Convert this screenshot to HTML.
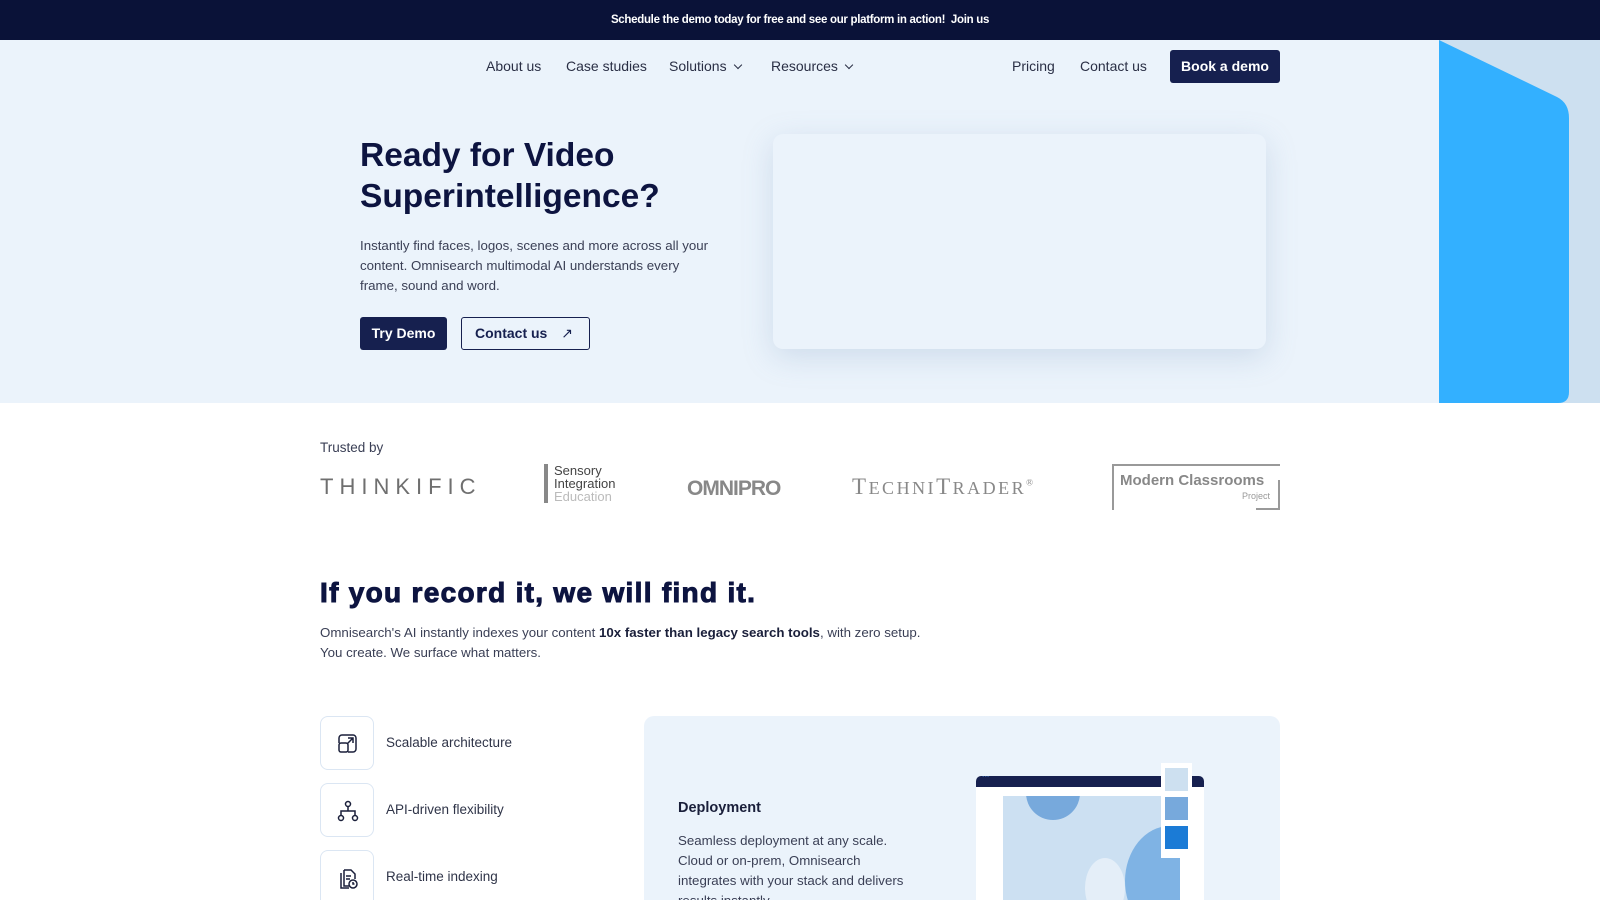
<!DOCTYPE html>
<html style="overflow:hidden;height:900px"><head><meta charset="utf-8"><style>
*{margin:0;padding:0;box-sizing:border-box}
body{width:1600px;height:900px;overflow:hidden;font-family:"Liberation Sans",Arial,sans-serif;background:#fff;color:#1a1f3a;position:relative}
.top{height:40px;background:#0a1238;color:#fff;font-size:11.5px;font-weight:bold;text-align:center;line-height:40px;letter-spacing:-0.3px}
.hero{position:absolute;top:40px;left:0;width:1600px;height:363px;background:#ebf3fb}
.nav a{position:absolute;top:58px;font-size:14px;color:#2a2f45;text-decoration:none}
.chev{display:inline-block;width:6px;height:6px;border-right:1.5px solid #2a2f45;border-bottom:1.5px solid #2a2f45;transform:rotate(45deg);margin-left:8px;position:relative;top:-3px}
.btn{position:absolute;border-radius:3px;font-weight:bold;font-size:14px;text-align:center}
h1{position:absolute;left:360px;top:135px;font-size:33.5px;line-height:41px;color:#0d1440;font-weight:bold}
.p{position:absolute;font-size:13.3px;line-height:20px;color:#3a3f55}
.card{position:absolute;left:773px;top:134px;width:493px;height:215px;background:#ebf3fb;border-radius:10px;box-shadow:0 8px 30px rgba(120,150,190,.25)}
.logo{position:absolute;color:#777;}
.feat{position:absolute;left:320px;width:54px;height:54px;border:1px solid #dbe6f3;border-radius:8px;background:#fff}
.feat svg{position:absolute;left:15px;top:15px}
.fl{position:absolute;left:386px;font-size:13.5px;color:#2f3448}
</style></head><body>
<div class="top">Schedule the demo today for free and see our platform in action! &nbsp;Join us</div>
<div class="hero"></div>
<svg style="position:absolute;left:1439px;top:40px" width="161" height="363"><rect x="0" y="0" width="161" height="363" fill="#cde0f0"/><path d="M0 0 L118 57 Q130 63 130 78 L130 352 Q130 363 119 363 L0 363 Z" fill="#33b0ff"/></svg>
<div class="nav">
<a style="left:486px">About us</a>
<a style="left:566px">Case studies</a>
<a style="left:669px">Solutions<span class="chev"></span></a>
<a style="left:771px">Resources<span class="chev"></span></a>
<a style="left:1012px">Pricing</a>
<a style="left:1080px">Contact us</a>
</div>
<div class="btn" style="left:1170px;top:50px;width:110px;height:33px;line-height:33px;background:#16204f;color:#fff">Book a demo</div>
<h1>Ready for Video<br>Superintelligence?</h1>
<div class="p" style="left:360px;top:236px;width:360px">Instantly find faces, logos, scenes and more across all your content. Omnisearch multimodal AI understands every frame, sound and word.</div>
<div class="btn" style="left:360px;top:317px;width:87px;height:33px;line-height:33px;background:#16204f;color:#fff">Try Demo</div>
<div class="btn" style="left:461px;top:317px;width:129px;height:33px;line-height:31px;border:1px solid #16204f;color:#16204f;text-align:left;padding-left:13px">Contact us <span style="position:absolute;right:16px;font-weight:normal">↗</span></div>
<div class="card"></div>
<div class="p" style="left:320px;top:438px;font-size:13.5px">Trusted by</div>
<div class="logo" style="left:320px;top:474px;font-size:22px;letter-spacing:6px;color:#6f6f6f">THINKIFIC</div>
<div class="logo" style="left:544px;top:464px;border-left:4px solid #888;padding-left:6px;font-size:13px;line-height:13px;color:#444">Sensory<br>Integration<br><span style="color:#bbb">Education</span></div>
<div class="logo" style="left:687px;top:477px;font-size:21px;font-weight:bold;color:#888;letter-spacing:-1px">OMNIPRO</div>
<div class="logo" style="left:852px;top:474px;font-family:'Liberation Serif',serif;font-size:23px;letter-spacing:2.5px;color:#888">T<span style="font-size:18px">ECHNI</span>T<span style="font-size:18px">RADER</span><sup style="font-size:9px">®</sup></div>
<div class="logo" style="left:1112px;top:464px;width:168px;height:46px;border-left:2px solid #999;border-top:2px solid #999;"><div style="position:absolute;right:0;bottom:0;width:24px;height:30px;border-right:2px solid #999;border-bottom:2px solid #999"></div><div style="position:absolute;left:6px;top:6px;font-weight:bold;font-size:15px;color:#888">Modern Classrooms</div><div style="position:absolute;right:10px;top:25px;font-size:9px;color:#999">Project</div></div>
<div style="position:absolute;left:320px;top:577px;font-size:28px;font-weight:900;color:#0d1440;letter-spacing:1.3px;-webkit-text-stroke:1px #0d1440">If you record it, we will find it.</div>
<div class="p" style="left:320px;top:623px;width:640px">Omnisearch's AI instantly indexes your content <b style="color:#1a1f3a">10x faster than legacy search tools</b>, with zero setup.<br>You create. We surface what matters.</div>
<div class="feat" style="top:716px"><svg width="24" height="24" fill="none" stroke="#1a1f3a" stroke-width="1.5"><rect x="3" y="11" width="9" height="9" rx="2"/><path d="M3 11V6a3 3 0 0 1 3-3h11a3 3 0 0 1 3 3v11a3 3 0 0 1-3 3h-5M11 12l6-6M12 6h5v5"/></svg></div>
<div class="fl" style="top:735px">Scalable architecture</div>
<div class="feat" style="top:783px"><svg width="24" height="24" fill="none" stroke="#1a1f3a" stroke-width="1.5"><circle cx="12" cy="5" r="2.5"/><circle cx="5" cy="19" r="2.5"/><circle cx="19" cy="19" r="2.5"/><path d="M12 7.5V12M5 16.5V12h14v4.5"/></svg></div>
<div class="fl" style="top:802px">API-driven flexibility</div>
<div class="feat" style="top:850px;height:50px;border-bottom:none;border-radius:8px 8px 0 0"><svg width="24" height="24" fill="none" stroke="#1a1f3a" stroke-width="1.5"><path d="M8 4h7l4 4v5M8 4v16h5M5 7v15h8"/><circle cx="17" cy="18" r="4"/><path d="M17 16v2h1.5M10 10h5M10 13h4"/></svg></div>
<div class="fl" style="top:869px">Real-time indexing</div>
<div style="position:absolute;left:644px;top:716px;width:636px;height:184px;background:#ebf3fb;border-radius:10px 10px 0 0;overflow:hidden">
<div style="position:absolute;left:34px;top:84px;font-size:14.5px;font-weight:bold;color:#1a1f3a">Deployment</div>
<div class="p" style="left:34px;top:115px;width:240px">Seamless deployment at any scale. Cloud or on-prem, Omnisearch integrates with your stack and delivers results instantly.</div>
<div style="position:absolute;left:332px;top:60px;width:228px;height:170px;background:#fff;border-radius:5px 5px 0 0;overflow:hidden">
<div style="height:11px;background:#16204f"><span style="color:#4a8fe0;font-size:7px;position:absolute;left:6px;top:-3px">•••</span></div>
<div style="position:absolute;left:27px;top:20px;width:177px;height:150px;background:#cce0f2;overflow:hidden">
<div style="position:absolute;left:23px;top:-30px;width:54px;height:54px;border-radius:50%;background:#77a9dc"></div>
<div style="position:absolute;left:122px;top:30px;width:90px;height:110px;border-radius:50%;background:#7fb3e4"></div>
<div style="position:absolute;left:82px;top:62px;width:40px;height:60px;border-radius:50%;background:#e4eef8"></div>
</div></div>
<div style="position:absolute;left:517px;top:47px;width:31px;height:95px;background:#fff">
<div style="position:absolute;left:4px;top:5px;width:23px;height:23px;background:#cde0f0"></div>
<div style="position:absolute;left:4px;top:34px;width:23px;height:23px;background:#77a9dc"></div>
<div style="position:absolute;left:4px;top:63px;width:23px;height:23px;background:#1b7bd6"></div>
</div>
</div>
</body></html>
